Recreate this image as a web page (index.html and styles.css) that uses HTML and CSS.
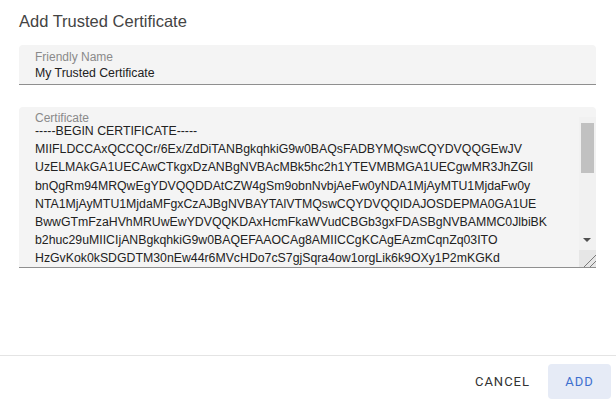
FILE: index.html
```html
<!DOCTYPE html>
<html lang="en">
<head>
    <meta charset="UTF-8">
    <meta name="viewport" content="width=device-width, initial-scale=1.0">
    <title>Add Trusted Certificate</title>
    <link rel="stylesheet" href="styles.css">
</head>
<body>
<!-- Add Trusted Certificate Dialog -->
<div class="cert-dialog">
  <h2 class="cert-dialog-title">Add Trusted Certificate</h2>

  <div class="cert-dialog-body">
    <div class="field">
      <label for="friendlyName">Friendly Name</label>
      <input type="text" id="friendlyName" value="My Trusted Certificate">
    </div>

    <div class="field field-area">
      <label for="certificate">Certificate</label>
      <div class="cert-input">
        <textarea id="certificate">-----BEGIN CERTIFICATE-----
MIIFLDCCAxQCCQCr/6Ex/ZdDiTANBgkqhkiG9w0BAQsFADBYMQswCQYDVQQGEwJV
UzELMAkGA1UECAwCTkgxDzANBgNVBAcMBk5hc2h1YTEVMBMGA1UECgwMR3JhZGll
bnQgRm94MRQwEgYDVQQDDAtCZW4gSm9obnNvbjAeFw0yNDA1MjAyMTU1MjdaFw0y
NTA1MjAyMTU1MjdaMFgxCzAJBgNVBAYTAlVTMQswCQYDVQQIDAJOSDEPMA0GA1UE
BwwGTmFzaHVhMRUwEwYDVQQKDAxHcmFkaWVudCBGb3gxFDASBgNVBAMMC0JlbiBK
b2huc29uMIICIjANBgkqhkiG9w0BAQEFAAOCAg8AMIICCgKCAgEAzmCqnZq03ITO
HzGvKok0kSDGDTM30nEw44r6MVcHDo7cS7gjSqra4ow1orgLik6k9OXy1P2mKGKd
wRz8mN2pQ7vL1xk3YtJcE5aB0fH6uG4sD9eW2rT8nM1oP3qK7iU0yV5xZ4cA6bEf
Lk2Jd8sQ0pR4tY7uW1xZ3aC5eG9iK2mO4qS6uW8yA0cE2gI4kM6oQ8sU0wY2aBcD
Tq9Vn3Xc7Zp1Bh5Dk9Fm3Hr7Jt1Lv5Nx9Pz3Rb7Td1Vf5Xh9Zj3Bl7Dn1Fp5Hr9
Jt3Lv7Nx1Pz5Rb9Td3Vf7Xh1Zj5Bl9Dn3Fp7Hr1Jt5Lv9Nx3Pz7Rb1Td5Vf9Xh3
Qa8Sc2Ue6Wg0Yi4Ak8Cm2Eo6Gq0Is4Ku8Mw2Oy6Qa0Sc4Ue8Wg2Yi6Ak0Cm4Eo8
Gq2Is6Ku0Mw4Oy8Qa2Sc6Ue0Wg4Yi8Ak2Cm6Eo0Gq4Is8Ku2Mw6Oy0Qa4Sc8Ue2
Wg6Yi0Ak4Cm8Eo2Gq6Is0Ku4Mw8Oy2Qa6Sc0Ue4Wg8Yi2Ak6Cm0Eo4Gq8Is2Ku6
Mw0Oy4Qa8Sc2Ue6Wg0Yi4Ak8Cm2Eo6Gq0Is4Ku8Mw2Oy6Qa0Sc4Ue8Wg2Yi6Ak0
-----END CERTIFICATE-----</textarea>
        <!-- Scrollbar drawn over the textarea -->
        <div class="cert-scrollbar" aria-hidden="true">
          <div class="cert-scrollbar-thumb"></div>
          <div class="cert-scrollbar-arrow"></div>
        </div>
        <div class="cert-resizer" aria-hidden="true"></div>
      </div>
    </div>
  </div>

  <div class="cert-dialog-actions">
    <button class="btn-cancel" id="cancelBtn">Cancel</button>
    <button class="btn-add" id="addBtn">Add</button>
  </div>
</div>
</body>
</html>
```

FILE: styles.css
```css
body {
  margin: 0;
  background-color: #ffffff;
  font-family: "Liberation Sans", Arial, sans-serif;
}

/* Dialog */
.cert-dialog {
  width: 616px;
  height: 402px;
  display: flex;
  flex-direction: column;
}

.cert-dialog-title {
  margin: 0;
  padding: 11px 19px 0;
  height: 34px;
  font-size: 16.5px;
  font-weight: 400;
  color: #444444;
  line-height: 20px;
}

.cert-dialog-body {
  flex: 1;
  padding: 0 20px 0 19px;
  display: flex;
  flex-direction: column;
  gap: 22px;
}

/* Filled fields */
.field {
  display: flex;
  flex-direction: column;
  background-color: #f4f4f4;
  border-radius: 4px 4px 0 0;
  border-bottom: 1px solid #8f8f8f;
  padding: 5px 0 0 16px;
}

.field label {
  font-size: 12px;
  line-height: 14px;
  color: #8a8a8a;
}

.field input {
  font-family: "Liberation Sans", Arial, sans-serif;
  font-size: 12.3px;
  color: #222222;
  background: transparent;
  border: none;
  outline: none;
  padding: 0;
  margin: 1px 0 3px;
  height: 16px;
  line-height: 16px;
}

.field-area {
  padding-top: 4px;
}

.cert-input {
  position: relative;
  margin-top: -8px;
}

.cert-input textarea {
  display: block;
  width: 100%;
  box-sizing: border-box;
  font-family: "Liberation Sans", Arial, sans-serif;
  font-size: 12.3px;
  line-height: 18.2px;
  color: #222222;
  background: transparent;
  border: none;
  outline: none;
  padding: 5px 17px 0 0;
  margin: 0;
  height: 150px;
  resize: none;
  overflow: hidden;
  white-space: pre;
}

/* Fake classic scrollbar */
.cert-scrollbar {
  position: absolute;
  top: 0;
  right: 0;
  width: 17px;
  height: 133px;
  background-color: #f1f1f1;
  pointer-events: none;
}

.cert-scrollbar-thumb {
  position: absolute;
  top: 6px;
  left: 2px;
  right: 2px;
  height: 50px;
  background-color: #c1c1c1;
}

.cert-scrollbar-arrow {
  position: absolute;
  left: 4px;
  top: 121px;
  width: 0;
  height: 0;
  border-left: 4px solid transparent;
  border-right: 4px solid transparent;
  border-top: 4px solid #505050;
}

.cert-resizer {
  position: absolute;
  right: 0;
  bottom: 0;
  width: 17px;
  height: 17px;
  background-color: #e6e6e6;
  background-image: linear-gradient(135deg, transparent 0 62%, #7a7a7a 62% 66%, transparent 66% 80%, #7a7a7a 80% 84%, transparent 84%);
  pointer-events: none;
}

/* Actions */
.cert-dialog-actions {
  box-sizing: border-box;
  border-top: 1px solid #e4e4e4;
  height: 47px;
  display: flex;
  justify-content: flex-end;
  align-items: flex-start;
  padding: 8px 5px 0 0;
  gap: 18px;
}

.cert-dialog-actions button {
  font-family: Roboto, "Liberation Sans", Arial, sans-serif;
  font-size: 13px;
  text-transform: uppercase;
  letter-spacing: 1px;
  border: none;
  border-radius: 4px;
  height: 35px;
  cursor: pointer;
}

.btn-cancel {
  background: transparent;
  color: #333333;
  padding: 0;
}

.btn-add {
  background-color: #e6ebf6;
  color: #3d6fcf;
  width: 63px;
  padding: 0;
}

.btn-add:hover {
  background-color: #d7e0f3;
}
```
